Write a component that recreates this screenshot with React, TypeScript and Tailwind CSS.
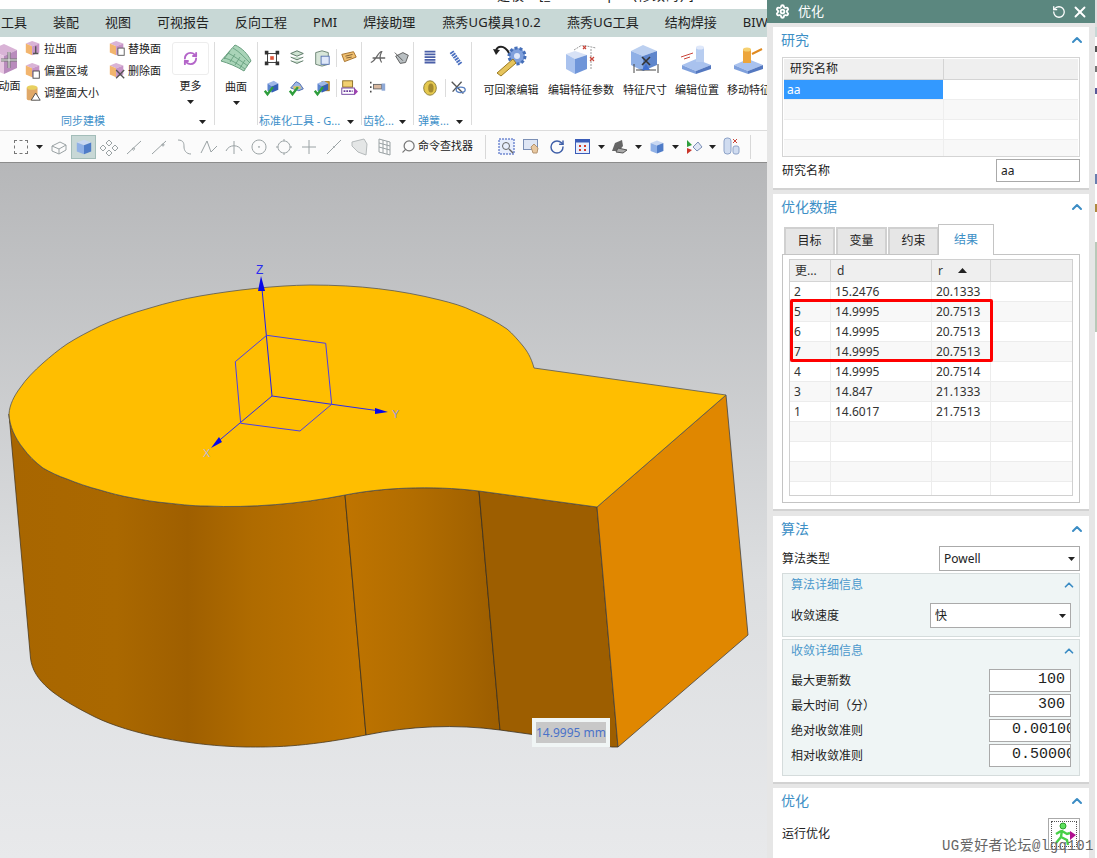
import { ChevronUp, RefreshCw, RotateCw, Search, X, Settings } from 'lucide-react';
import type { ReactNode } from 'react';

const MENU = [
  ['工具', ''],
  ['装配', ''],
  ['视图', ''],
  ['可视报告', ''],
  ['反向工程', ''],
  ['PMI', ''],
  ['焊接助理', ''],
  ['燕秀UG模具10.2', 'ml-px tracking-[0.2px]'],
  ['燕秀UG工具', 'tracking-[0.15px]'],
  ['结构焊接', ''],
  ['BIW', ''],
];

const RESULTS = [
  ['2', '15.2476', '20.1333'],
  ['5', '14.9995', '20.7513'],
  ['6', '14.9995', '20.7513'],
  ['7', '14.9995', '20.7513'],
  ['4', '14.9995', '20.7514'],
  ['3', '14.847', '21.1333'],
  ['1', '14.6017', '21.7513'],
  ['', '', ''],
  ['', '', ''],
  ['', '', ''],
  ['', '', ''],
];

// outline pieces of the part, in screen coordinates
const FRONT_LEFT =
  'C9.500 425 15 437 23 447C28 454 35 461 43 467C50 471 58 475 67 478C77 482 88 486 100 489C110 492 121 495 133 497C144 499 155 501 167 502C178 503 190 505 207 505C250 507 300 503 345 494';
const BACK =
  'M9 413C9.500 404 14 395 20 387C26 378 34 370 43 362C50 356 58 349 67 343C78 336 88 331 100 325C115 318 132 312 150 307C166 302 183 298 200 295C235 289 275 284.500 310 284C360 284 400 289 440 299C452 302 463 305 473 310C485 315 497 321 507 328C513 333 518 339 523 345C527 350 531 356 534 367L726 394L597 506L479 490C430 484 380 487 345 494L345 494';
const FRONT_BACK =
  'C300 503 250 507 207 505C190 505 178 503 167 502C155 501 144 499 133 497C121 495 110 492 100 489C88 486 77 482 67 478C58 475 50 471 43 467C35 461 28 454 23 447C15 437 9.500 425 9 413Z';

function Ico({ size = 18, children }: { size?: number; children: ReactNode }) {
  return (
    <svg width={size} height={size} viewBox="0 0 20 20" className="shrink-0">
      {children}
    </svg>
  );
}

function Caret() {
  return (
    <svg width="7" height="4" viewBox="0 0 7 4" className="shrink-0">
      <polygon points="0,0 7,0 3.5,4" fill="#222" />
    </svg>
  );
}

function PinkCube({ children }: { children?: ReactNode }) {
  return (
    <Ico>
      <polygon points="9,1 17,4 9,7 2,4" fill="#d9b3d6" />
      <polygon points="2,4 9,7 9,17 2,14" fill="#f2b56e" />
      <polygon points="9,7 17,4 17,14 9,17" fill="#c693c6" />
      {children}
    </Ico>
  );
}

function BlueCube({ size = 18 }: { size?: number }) {
  return (
    <Ico size={size}>
      <polygon points="10,2 18,5 10,8 2,5" fill="#c9d8f2" />
      <polygon points="2,5 10,8 10,18 2,15" fill="#8fb0e6" />
      <polygon points="10,8 18,5 18,15 10,18" fill="#4f7cc8" />
    </Ico>
  );
}

function BlueBlock() {
  return (
    <>
      <polygon points="5,5 12,2 17,5 10,8" fill="#9db7e8" />
      <polygon points="5,5 10,8 10,15 5,13" fill="#5b84d0" />
      <polygon points="10,8 17,5 17,12 10,15" fill="#345fb4" />
    </>
  );
}

function GreenCheck() {
  return <polyline points="2,13 5,17 11,9" fill="none" stroke="#2f9e3c" strokeWidth="2.6" />;
}

function SmallFace({ icon, label }: { icon: ReactNode; label: string }) {
  return (
    <div className="flex h-[22px] items-center text-[11px] whitespace-nowrap text-[#222]">
      {icon}
      <span className="ml-[2px]">{label}</span>
    </div>
  );
}

function GroupLabel({ text, wide }: { text: string; wide: string }) {
  return (
    <div className={`mt-auto flex h-[19px] items-center justify-between pt-[2px] text-[11px] whitespace-nowrap text-[#3d90c9] ${wide}`}>
      <span>{text}</span>
      <Caret />
    </div>
  );
}

function Sep() {
  return <div className="my-[5px] w-px shrink-0 bg-[#dcdcdc]" />;
}

function MiniSep() {
  return <div className="h-[18px] w-px bg-[#dcdcdc]" />;
}

function BigTool({ icon, label, width }: { icon: ReactNode; label: string; width: string }) {
  return (
    <div className={`flex shrink-0 flex-col items-center ${width}`}>
      <div className="flex h-[36px] items-center justify-center">{icon}</div>
      <span className="mt-[4px] text-[11px] whitespace-nowrap text-[#222]">{label}</span>
    </div>
  );
}

function Slot({ children, active }: { children?: ReactNode; active?: boolean }) {
  return (
    <div className={`flex h-[24px] w-[25px] shrink-0 items-center justify-center ${active ? 'border border-[#a3bdb9] bg-[#c8d8d6]' : ''}`}>
      {children}
    </div>
  );
}

function CaretSlot() {
  return (
    <div className="flex h-[24px] w-[12px] shrink-0 items-center justify-center">
      <Caret />
    </div>
  );
}

function Line({ d }: { d: string }) {
  return (
    <Ico size={20}>
      <path d={d} fill="none" stroke="#9aa2a4" strokeWidth="1" />
    </Ico>
  );
}

function Ribbon() {
  return (
    <div className="flex h-[93px] bg-white">
      <div className="flex w-[214px] shrink-0 flex-col">
        <div className="flex pt-px">
          <div className="w-[24px] shrink-0 overflow-hidden">
            <div className="-ml-[14px] flex w-[36px] flex-col items-center">
              <svg width="28" height="32" viewBox="0 0 28 32" className="mt-[6px]">
                <polygon points="14,0 27,6 14,12 1,6" fill="#d9b3d6" />
                <polygon points="1,6 14,12 14,30 1,24" fill="#e7c7e2" />
                <polygon points="14,12 27,6 27,24 14,30" fill="#b98bbd" />
                <path d="M19 8v16M11 16h16" stroke="#777" strokeWidth="3" />
                <path d="M19 8v16M11 16h16" stroke="#eee" strokeWidth="1" />
              </svg>
              <span className="mt-[2px] text-[11px] whitespace-nowrap text-[#222]">移动面</span>
            </div>
          </div>
          <div className="w-[84px] shrink-0">
            <SmallFace
              label="拉出面"
              icon={
                <PinkCube>
                  <path d="M13 7v8M10 15h6" stroke="#555" strokeWidth="1.5" />
                </PinkCube>
              }
            />
            <SmallFace
              label="偏置区域"
              icon={
                <PinkCube>
                  <rect x="10" y="10" width="7" height="8" fill="#fff" stroke="#444" />
                </PinkCube>
              }
            />
            <SmallFace
              label="调整面大小"
              icon={
                <Ico>
                  <rect x="3" y="3" width="12" height="15" rx="2" fill="#e0a868" />
                  <ellipse cx="9" cy="4" rx="6" ry="2.5" fill="#e8d060" />
                  <polygon points="13,10 18,18 8,18" fill="#fff" stroke="#444" />
                </Ico>
              }
            />
          </div>
          <div className="w-[64px] shrink-0">
            <SmallFace
              label="替换面"
              icon={
                <PinkCube>
                  <rect x="11" y="9" width="7" height="8" fill="#fff" stroke="#555" />
                </PinkCube>
              }
            />
            <SmallFace
              label="删除面"
              icon={
                <PinkCube>
                  <path d="M9 9l9 9M18 9l-9 9" stroke="#555" strokeWidth="1.5" />
                </PinkCube>
              }
            />
          </div>
          <div className="flex w-[37px] shrink-0 flex-col items-center">
            <div className="mt-[4px] flex h-[33px] w-[37px] items-center justify-center rounded-[3px] border border-[#ededed]">
              <RefreshCw size={15} strokeWidth={3} color="#b465c9" />
            </div>
            <span className="mt-[3px] text-[11px] text-[#222]">更多</span>
            <div className="mt-[5px] flex">
              <Caret />
            </div>
          </div>
        </div>
        <div className="mt-auto flex h-[19px] items-center pt-[2px] pr-[8px] pl-[61px] text-[11px] text-[#3d90c9]">
          <span>同步建模</span>
          <div className="ml-auto flex">
            <Caret />
          </div>
        </div>
      </div>
      <Sep />
      <div className="flex w-[42px] shrink-0 flex-col items-center">
        <svg width="32" height="28" viewBox="0 0 32 28" className="mt-[7px]">
          <path d="M1 17 C8 9 12 4 15 1 C22 4 28 10 31 17 C28 20 26 24 24 27 C16 22 8 19 1 17Z" fill="#a9d4b8" stroke="#6a9f80" />
          <path d="M8 9 C14 12 21 17 28 22 M13 4 C20 8 25 14 30 19 M4 14 C10 15 18 20 25 25 M10 7 L4 15 M15 10 L10 18 M20 13 L15 21 M25 16 L20 24" fill="none" stroke="#5f9a78" strokeWidth="0.8" />
        </svg>
        <span className="mt-[7px] text-[11px] text-[#222]">曲面</span>
        <div className="mt-[5px] flex">
          <Caret />
        </div>
      </div>
      <Sep />
      <div className="flex w-[103px] shrink-0 flex-col">
        <div className="grid grid-cols-[25px_25px_25px_25px] pt-[6px] pl-[1px]">
          <div className="flex h-[30px] items-center justify-center">
            <Ico>
              <rect x="5" y="5" width="10" height="10" fill="none" stroke="#333" />
              <path d="M2 2h4v4H2zM14 2h4v4h-4zM2 14h4v4H2zM14 14h4v4h-4z" fill="#333" />
              <rect x="8" y="8" width="4" height="4" fill="#e0563a" />
            </Ico>
          </div>
          <div className="flex h-[30px] items-center justify-center">
            <Ico>
              <path d="M3 5l7-3 7 3-7 3zM3 9l7 3 7-3M3 13l7 3 7-3" fill="#cfe3d2" stroke="#54715f" />
            </Ico>
          </div>
          <div className="flex h-[30px] items-center justify-center">
            <Ico>
              <path d="M3 4l7-2 7 2v13l-7 2-7-2z" fill="#d8e6d9" stroke="#657f6e" />
              <rect x="9" y="8" width="9" height="9" fill="#dfe8fa" stroke="#5572b0" />
            </Ico>
          </div>
          <div className="flex h-[30px] items-center justify-center gap-[3px]">
            <MiniSep />
            <Ico>
              <polygon points="2,6 15,3 18,9 5,14" fill="#f0c070" stroke="#a06a20" />
              <path d="M6 8l8-2M7 10l6-1" stroke="#7a5a30" />
            </Ico>
          </div>
          <div className="flex h-[30px] items-center justify-center">
            <Ico>
              <BlueBlock />
              <GreenCheck />
            </Ico>
          </div>
          <div className="flex h-[30px] items-center justify-center">
            <Ico>
              <path d="M3 10l6-7 4 2 4 6-5 2z" fill="#9db7e8" stroke="#4a66a8" />
              <rect x="6" y="8" width="8" height="3" fill="#d9c26a" />
              <GreenCheck />
            </Ico>
          </div>
          <div className="flex h-[30px] items-center justify-center">
            <Ico>
              <rect x="10" y="3" width="8" height="10" fill="#edb23b" stroke="#9a6b10" />
              <BlueBlock />
              <GreenCheck />
            </Ico>
          </div>
          <div className="flex h-[30px] items-center justify-center gap-[3px]">
            <MiniSep />
            <Ico>
              <rect x="3" y="2" width="11" height="7" fill="#f2d070" stroke="#8a6a20" />
              <rect x="2" y="10" width="14" height="7" fill="#fff" stroke="#6a3a9a" />
              <path d="M4 13.5h10" stroke="#6a3a9a" strokeWidth="2" strokeDasharray="2 1" />
              <polygon points="16,10 20,14 16,18" fill="#a040b0" />
            </Ico>
          </div>
        </div>
        <GroupLabel text="标准化工具 - G..." wide="pr-[7px] pl-[1px]" />
      </div>
      <Sep />
      <div className="flex w-[51px] shrink-0 flex-col">
        <div className="grid grid-cols-[25px_23px] pt-[6px] pl-[3px]">
          <div className="flex h-[30px] items-center justify-center">
            <Ico>
              <path d="M2 15C8 13 10 3 14 3c-2 4-2 9 0 12M4 10h14" fill="none" stroke="#666" strokeWidth="1.4" />
            </Ico>
          </div>
          <div className="flex h-[30px] items-center justify-center">
            <Ico>
              <path d="M3 8l8-4 6 3-3 8-6 1z" fill="#b9bfc2" stroke="#555" />
              <path d="M2 4l9 9" stroke="#555" />
            </Ico>
          </div>
          <div className="flex h-[30px] items-center justify-center">
            <Ico>
              <path d="M2 3v2M2 8v2M2 13v2" stroke="#333" strokeWidth="1.5" />
              <rect x="5" y="6" width="9" height="5" fill="#d9b9a0" stroke="#666" />
              <rect x="14" y="5" width="4" height="8" fill="#8fa9d6" />
            </Ico>
          </div>
        </div>
        <GroupLabel text="齿轮..." wide="pr-[7px] pl-[1px]" />
      </div>
      <Sep />
      <div className="flex w-[57px] shrink-0 flex-col">
        <div className="grid grid-cols-[26px_26px] pt-[6px] pl-[3px]">
          <div className="flex h-[30px] items-center justify-center">
            <Ico>
              <path d="M4 3h12M4 6h12M4 9h12M4 12h12M4 15h12" stroke="#4a5fa8" strokeWidth="2" />
            </Ico>
          </div>
          <div className="flex h-[30px] items-center justify-center">
            <Ico>
              <path d="M5 3l10 14" stroke="#4a6fc0" strokeWidth="5" strokeDasharray="2 1" />
            </Ico>
          </div>
          <div className="flex h-[30px] items-center justify-center">
            <Ico>
              <ellipse cx="10" cy="10" rx="7" ry="8" fill="#e5c84e" stroke="#8a7a30" />
              <ellipse cx="11" cy="10" rx="3" ry="5" fill="#a48a30" />
            </Ico>
          </div>
          <div className="flex h-[30px] items-center justify-center gap-[3px]">
            <MiniSep />
            <Ico>
              <path d="M3 3l13 13M14 3L4 14" stroke="#555" strokeWidth="1.5" />
              <ellipse cx="13" cy="12" rx="5" ry="3" fill="none" stroke="#5a80c0" strokeWidth="1.5" />
            </Ico>
          </div>
        </div>
        <GroupLabel text="弹簧..." wide="pr-[8px] pl-[4px]" />
      </div>
      <Sep />
      <div className="flex min-w-0 flex-1 overflow-hidden pt-[5px] pl-[12px]">
        <BigTool
          width="w-[54px]"
          label="可回滚编辑"
          icon={
            <svg width="36" height="34" viewBox="0 0 36 34">
              <circle cx="24" cy="13" r="8" fill="#7fa0dc" stroke="#466fb8" strokeWidth="3" strokeDasharray="3 2" />
              <circle cx="24" cy="13" r="3" fill="#dfe8fa" />
              <path d="M4 30l16-14 3 4-15 13z" fill="#e6c45c" stroke="#9b7a20" />
              <path d="M16 10C11 1 4 3 3 8" fill="none" stroke="#222" strokeWidth="2" />
              <polygon points="0,6 7,7 3,12" fill="#222" />
            </svg>
          }
        />
        <div className="w-[10px] shrink-0" />
        <BigTool
          width="w-[66px]"
          label="编辑特征参数"
          icon={
            <svg width="32" height="30" viewBox="0 0 32 30">
              <polygon points="10,6 22,10 10,14 1,9" fill="#d8e2f6" />
              <polygon points="1,9 10,14 10,29 1,24" fill="#a9c2ee" />
              <polygon points="10,14 22,10 22,24 10,29" fill="#6f95d9" />
              <path d="M9 5L17 0l14 3M26 4v20" fill="none" stroke="#999" strokeDasharray="2 1" />
              <path d="M25 12l4 4M29 12l-4 4M18 1l3 3M21 1l-3 3" stroke="#c9453a" strokeWidth="1.2" />
            </svg>
          }
        />
        <div className="w-[9px] shrink-0" />
        <BigTool
          width="w-[44px]"
          label="特征尺寸"
          icon={
            <svg width="32" height="30" viewBox="0 0 32 30">
              <polygon points="14,0 28,6 14,11 2,6" fill="#bcd0f0" />
              <polygon points="2,6 14,11 14,26 2,20" fill="#8fb0e6" />
              <polygon points="14,11 28,6 28,20 14,26" fill="#5f86cc" />
              <path d="M13 12l8 8M21 12l-8 8" stroke="#333" strokeWidth="1.6" />
              <path d="M5 19v9M29 19v9M7 25h20" stroke="#444" />
              <polygon points="17,19 21,25 13,25" fill="#3f6fd0" />
            </svg>
          }
        />
        <div className="w-[8px] shrink-0" />
        <BigTool
          width="w-[44px]"
          label="编辑位置"
          icon={
            <svg width="32" height="30" viewBox="0 0 32 30">
              <polygon points="15,14 30,20 15,26 1,20" fill="#a9c2ee" />
              <polygon points="1,20 15,26 15,29 1,24" fill="#7fa0dc" />
              <polygon points="15,26 30,20 30,24 15,29" fill="#5478c0" />
              <rect x="15" y="2" width="8" height="15" fill="#b8cdf0" />
              <ellipse cx="19" cy="2.5" rx="4" ry="2" fill="#dfe8fa" />
              <path d="M0 12l12-4M3 14l6-2" stroke="#c9453a" />
            </svg>
          }
        />
        <div className="w-[8px] shrink-0" />
        <BigTool
          width="w-[44px]"
          label="移动特征"
          icon={
            <svg width="32" height="30" viewBox="0 0 32 30">
              <polygon points="15,14 30,20 15,26 1,20" fill="#a9c2ee" />
              <polygon points="1,20 15,26 15,29 1,24" fill="#7fa0dc" />
              <polygon points="15,26 30,20 30,24 15,29" fill="#5478c0" />
              <rect x="10" y="4" width="8" height="14" fill="#eda53a" />
              <ellipse cx="14" cy="4.5" rx="4" ry="2" fill="#f6d070" />
              <path d="M19 9l10-5" stroke="#e08a20" strokeWidth="2" />
            </svg>
          }
        />
      </div>
    </div>
  );
}

function Toolbar() {
  return (
    <div className="flex h-[32px] items-center border-t border-[#dcdcdc] bg-[#fbfbfb]">
      <div className="w-[8px] shrink-0" />
      <Slot>
        <div className="h-[14px] w-[14px] border border-dashed border-[#777]" />
      </Slot>
      <CaretSlot />
      <div className="w-px shrink-0" />
      <Slot>
        <Line d="M3 9l8-4 6 3v5l-7 4-7-3zM3 9l7 3 7-4M10 12v5" />
      </Slot>
      <Slot active>
        <BlueCube />
      </Slot>
      <Slot>
        <Line d="M10 3l3 3-3 3-3-3zM4 8l3 3-3 3-3-3zM16 8l3 3-3 3-3-3zM10 13l3 3-3 3-3-3z" />
      </Slot>
      <Slot>
        <Line d="M3 17L17 4M9.500 11a1 1 0 1 0 .01 0" />
      </Slot>
      <Slot>
        <Line d="M3 17L17 4M14 7a1 1 0 1 0 .01 0" />
      </Slot>
      <Slot>
        <Line d="M4 3c6 0 6 4 6 7s2 7 7 7" />
      </Slot>
      <Slot>
        <Line d="M2 16L8 4l4 11 6-6M8 4h.01M12 15h.01" />
      </Slot>
      <Slot>
        <Line d="M2 14C5 7 15 7 18 14M10 4v13" />
      </Slot>
      <Slot>
        <Line d="M10 3a7 7 0 1 0 .01 0M10 9.500a.5.5 0 1 0 .01 0" />
      </Slot>
      <Slot>
        <Line d="M10 4a6 6 0 1 0 .01 0M10 2v2M10 16v2M2 10h2M16 10h2" />
      </Slot>
      <Slot>
        <Line d="M10 3v14M3 10h14" />
      </Slot>
      <Slot>
        <Line d="M3 17L17 3M10 9.500a.5.5 0 1 0 .01 0" />
      </Slot>
      <Slot>
        <svg width="20" height="20" viewBox="0 0 20 20">
          <path d="M3 5l12-3 3 5-1 11-8-3-6-6z" fill="#e4e6e6" stroke="#b5babb" />
        </svg>
      </Slot>
      <Slot>
        <Line d="M5 2l11 3v13L5 15zM5 6l11 3M5 10l11 3M9 3v13M13 4v13" />
      </Slot>
      <Slot>
        <Search size={15} color="#777" className="-scale-x-100" />
      </Slot>
      <span className="ml-[-3px] w-[58px] shrink-0 text-[11px] text-[#222]">命令查找器</span>
      <div className="ml-[9px] h-[24px] w-px shrink-0 bg-[#d8d8d8]" />
      <div className="w-[8px] shrink-0" />
      <Slot>
        <svg width="17" height="17" viewBox="0 0 17 17">
          <rect x="1" y="1" width="15" height="15" fill="#e8eefc" stroke="#3355bb" strokeDasharray="2 1" />
          <circle cx="8" cy="8" r="3.500" fill="none" stroke="#666" />
          <path d="M11 11l4 4" stroke="#666" strokeWidth="1.5" />
        </svg>
      </Slot>
      <Slot>
        <svg width="17" height="15" viewBox="0 0 17 15">
          <rect x="0.500" y="0.500" width="14" height="10" fill="#dfe6f4" stroke="#7b8fb5" />
          <path d="M8 8l3-3 4 4-1 5h-4z" fill="#e8c8a0" stroke="#b59470" />
        </svg>
      </Slot>
      <Slot>
        <RotateCw size={16} color="#3f5fa8" strokeWidth={2.2} />
      </Slot>
      <div className="w-px shrink-0" />
      <Slot>
        <svg width="15" height="15" viewBox="0 0 15 15">
          <rect x="0.500" y="0.500" width="14" height="14" fill="#e8eefc" stroke="#3a5cb8" />
          <rect x="0.500" y="0.500" width="14" height="3" fill="#3a5cb8" />
          <path d="M4 6h2v2H4zM9 6h2v2H9zM4 10h2v2H4zM9 10h2v2H9z" fill="#d43a2a" />
        </svg>
      </Slot>
      <CaretSlot />
      <Slot>
        <svg width="17" height="15" viewBox="0 0 17 15">
          <path d="M1 12l3-8 7-3 1 6-4 5z" fill="#666" />
          <path d="M7 9l9 2-4 3-7-1z" fill="#aaa" stroke="#555" />
        </svg>
      </Slot>
      <CaretSlot />
      <Slot>
        <BlueCube size={16} />
      </Slot>
      <CaretSlot />
      <Slot>
        <svg width="18" height="16" viewBox="0 0 18 16">
          <polygon points="2,1 7,6 2,8" fill="#2e9e3c" />
          <polygon points="2,9 7,11 2,15" fill="#c9352a" />
          <polygon points="8,8 13,3 17,8 12,12" fill="#dfe6f4" stroke="#7b8fb5" />
        </svg>
      </Slot>
      <CaretSlot />
      <div className="w-px shrink-0" />
      <Slot>
        <svg width="17" height="19" viewBox="0 0 17 19">
          <rect x="1" y="1" width="7" height="16" rx="3" fill="#d0dcf0" stroke="#8ea3c8" />
          <rect x="10" y="9" width="6" height="8" rx="2" fill="#d0dcf0" stroke="#8ea3c8" />
          <path d="M10 2l4 4M14 2l-4 4" stroke="#c9453a" />
        </svg>
      </Slot>
      <div className="ml-[6px] h-[24px] w-px shrink-0 bg-[#d8d8d8]" />
    </div>
  );
}

function Canvas() {
  return (
    <div className="relative h-[696px] overflow-hidden border-t border-[#8c8c8c] bg-gradient-to-b from-[#b6b7b9] via-[#dcdee0] via-60% to-[#e8e9eb]">
      <svg width="767" height="696" viewBox="0 162 767 696" className="block">
        <defs>
          <linearGradient id="leftSide" gradientUnits="userSpaceOnUse" x1="9" y1="0" x2="366" y2="0">
            <stop offset="0" stopColor="#a86600" />
            <stop offset="0.3" stopColor="#aa6800" />
            <stop offset="0.5" stopColor="#9f5f00" />
            <stop offset="0.68" stopColor="#af6b00" />
            <stop offset="0.9" stopColor="#bb7200" />
            <stop offset="1" stopColor="#c07500" />
          </linearGradient>
          <linearGradient id="midSide" gradientUnits="userSpaceOnUse" x1="345" y1="0" x2="495" y2="0">
            <stop offset="0" stopColor="#bf7400" />
            <stop offset="0.45" stopColor="#b26d00" />
            <stop offset="0.8" stopColor="#a56400" />
            <stop offset="1" stopColor="#9d5e00" />
          </linearGradient>
        </defs>
        <path
          d={`M9 413${FRONT_LEFT}L366 734C300 747 270 746 246 746C190 745 130 733 95 716C55 696 33 680 30.500 657Z`}
          fill="url(#leftSide)"
          stroke="#4a3a20"
          strokeWidth="0.8"
        />
        <path d="M345 494C380 487 430 484 479 490L500 729C455 723 410 725 366 734Z" fill="url(#midSide)" stroke="#3a3020" strokeWidth="0.8" />
        <path d="M479 490L597 506L618 746L612 746L536 734L500 729Z" fill="#9d5e00" stroke="#3a3020" strokeWidth="0.8" />
        <polygon points="597,506 726,394 748,634 618,746" fill="#e08700" stroke="#444" strokeWidth="0.8" />
        <path d={`${BACK}${FRONT_BACK}`} fill="#ffbe00" stroke="#555" strokeWidth="0.8" />
        <g fill="none" stroke="#4a3fe8" strokeWidth="1">
          <path d="M272 395L262 288" stroke="#2020f0" />
          <path d="M272 395L380 410" stroke="#2a2af0" />
          <path d="M272 395L215 443" stroke="#2a2af0" />
          <path d="M266.700 334.300L325.700 342.300L331.700 403.300M266.700 334.300L235.300 360.700L240.700 422.300L300 430L331.700 403.300" />
        </g>
        <polygon points="261,275 265,290 258,290" fill="#0808e8" />
        <polygon points="388,411 375,407 375,413" fill="#0808e8" />
        <polygon points="211,447 219,436 222,441" fill="#0808e8" />
        <text x="256" y="273" fontSize="12" fill="#2a2af0" fontFamily="Liberation Sans, sans-serif">
          Z
        </text>
        <text x="392" y="417" fontSize="11" fill="#8f90e0" fontFamily="Liberation Sans, sans-serif">
          Y
        </text>
        <text x="203" y="456" fontSize="11" fill="#b9b6d8" fontFamily="Liberation Sans, sans-serif">
          X
        </text>
      </svg>
      <div className="absolute top-[555px] left-[532px] border-4 border-[#f0f5f5] bg-[#c8c8c8] text-[12px] leading-[21px] whitespace-nowrap text-[#4a72c8]">
        14.9995 mm
      </div>
    </div>
  );
}

function SectionHead({ title }: { title: string }) {
  return (
    <div className="flex h-[26px] items-center justify-between pr-[4px] pl-[8px] text-[14px] text-[#3d8fc6]">
      <span className="-mt-[2px]">{title}</span>
      <ChevronUp size={16} strokeWidth={3} color="#3b8cc4" />
    </div>
  );
}

function SubHead({ title }: { title: string }) {
  return (
    <div className="flex h-[21px] items-center justify-between pr-[3px] pl-[8px] text-[12px] text-[#4b98cc]">
      <span>{title}</span>
      <ChevronUp size={14} strokeWidth={3} color="#3b8cc4" />
    </div>
  );
}

function Select({ value, width }: { value: string; width: string }) {
  return (
    <div className={`flex h-[25px] items-center justify-between border border-[#aaa] bg-white pr-[4px] pl-[4px] text-[12px] text-[#222] ${width}`}>
      <span>{value}</span>
      <Caret />
    </div>
  );
}

function NumberRow({ label, value, long }: { label: string; value: string; long?: boolean }) {
  return (
    <div className="flex h-[23px] items-center justify-between pr-[8px] pl-[8px] text-[12px] text-[#222]">
      <span>{label}</span>
      <div
        className={`flex h-[23px] w-[82px] items-center overflow-hidden border border-[#aaa] bg-white font-['Liberation_Mono',monospace] text-[15px] whitespace-nowrap ${
          long ? 'pl-[22px]' : 'justify-end pr-[5px]'
        }`}
      >
        {value}
      </div>
    </div>
  );
}

function StudyTable() {
  return (
    <div className="h-[100px] overflow-hidden border border-[#d4d4d4] p-px text-[12px]">
      <div className="flex h-[21px] border-b border-[#d4d4d4] bg-[#efefef] text-[#222]">
        <div className="flex w-[160px] items-center border-r border-[#d4d4d4] pl-[6px]">研究名称</div>
      </div>
      <div className="flex h-[20px] border-b border-[#eee]">
        <div className="flex w-[159px] items-center bg-[#3399ff] pl-[3px] text-white">aa</div>
      </div>
      {['bg-[#f8f8f8]', 'bg-white', 'bg-[#f8f8f8]'].map((bg, i) => (
        <div key={i} className={`flex h-[20px] border-b border-[#eee] ${bg}`}>
          <div className="w-[160px] border-r border-[#eee]" />
        </div>
      ))}
    </div>
  );
}

function ResultsTable() {
  return (
    <div className="relative h-[237px] w-[284px] overflow-hidden border border-[#d0d0d0] text-[12px] text-[#333]">
      <div className="flex h-[22px] border-b border-[#d4d4d4] bg-[#efefef]">
        <div className="flex w-[41px] items-center border-r border-[#d4d4d4] pl-[5px]">更...</div>
        <div className="flex w-[101px] items-center border-r border-[#d4d4d4] pl-[6px]">d</div>
        <div className="flex w-[59px] items-center gap-[15px] border-r border-[#d4d4d4] pl-[6px]">
          r
          <svg width="9" height="5" viewBox="0 0 9 5">
            <polygon points="4.500,0 9,5 0,5" fill="#222" />
          </svg>
        </div>
      </div>
      {RESULTS.map((row, i) => (
        <div key={i} className={`flex h-[20px] border-b border-[#ececec] ${i % 2 === 0 ? 'bg-white' : 'bg-[#f8f8f8]'}`}>
          <div className="flex w-[41px] items-center border-r border-[#ececec] pl-[4px]">{row[0]}</div>
          <div className="flex w-[101px] items-center border-r border-[#ececec] pl-[4px]">{row[1]}</div>
          <div className="flex w-[59px] items-center border-r border-[#ececec] pl-[4px]">{row[2]}</div>
        </div>
      ))}
      <div className="absolute top-[39px] left-0 h-[63px] w-[203px] rounded-[2px] border-[3px] border-[#ff0000]" />
    </div>
  );
}

function Panel() {
  return (
    <div className="w-[328px] shrink-0 bg-[#e6e6e6]">
      <div className="flex h-[23px] items-center bg-[#5b877f] pr-[6px] pl-[8px] text-[13px] text-white">
        <Settings size={15} strokeWidth={3} />
        <span className="ml-[8px]">优化</span>
        <RotateCw size={14} strokeWidth={2.2} className="ml-auto -scale-x-100" />
        <X size={18} strokeWidth={2.5} className="ml-[5px]" />
      </div>
      <div className="mt-[4px] ml-[6px] h-[163px] w-[316px] border-b-2 border-[#d2d2d2] bg-white">
        <SectionHead title="研究" />
        <div className="mt-[4px] px-[9px]">
          <StudyTable />
          <div className="mt-[2px] flex h-[23px] items-center justify-between text-[12px] text-[#222]">
            <span>研究名称</span>
            <div className="flex h-[23px] w-[84px] items-center border border-[#aaa] pl-[4px]">aa</div>
          </div>
        </div>
      </div>
      <div className="mt-[4px] ml-[6px] h-[317px] w-[316px] border-b-2 border-[#d2d2d2] bg-white">
        <SectionHead title="优化数据" />
        <div className="mt-[4px] px-[9px]">
          <div className="relative z-10 -mb-px flex h-[31px] items-end gap-px pl-[2px] text-[12px] text-[#222]">
            {['目标', '变量', '约束'].map((t) => (
              <div key={t} className="mb-px flex h-[27px] w-[51px] items-center justify-center border-x-2 border-t-2 border-[#d0d0d0] bg-[#e6e6e6] pb-px">
                {t}
              </div>
            ))}
            <div className="-ml-[2px] flex h-[31px] w-[56px] items-center justify-center border-x border-t border-[#c4c4c4] bg-white text-[#3d8fc6]">结果</div>
          </div>
          <div className="h-[249px] border border-[#c4c4c4] pt-[4px] pl-[6px]">
            <ResultsTable />
          </div>
        </div>
      </div>
      <div className="mt-[5px] ml-[6px] h-[268px] w-[316px] border-b-2 border-[#d2d2d2] bg-white">
        <SectionHead title="算法" />
        <div className="mt-[4px] px-[9px]">
          <div className="flex items-center justify-between text-[12px] text-[#222]">
            <span>算法类型</span>
            <Select value="Powell" width="w-[141px]" />
          </div>
          <div className="mt-[2px] h-[64px] border border-[#d5dcdc] bg-[#eff5f5]">
            <SubHead title="算法详细信息" />
            <div className="mt-[8px] flex items-center justify-between pr-[8px] pl-[8px] text-[12px] text-[#222]">
              <span>收敛速度</span>
              <Select value="快" width="w-[141px]" />
            </div>
          </div>
          <div className="mt-[2px] h-[137px] border border-[#d5dcdc] bg-[#eff5f5]">
            <SubHead title="收敛详细信息" />
            <div className="mt-[8px] flex flex-col gap-[2px]">
              <NumberRow label="最大更新数" value="100" />
              <NumberRow label="最大时间（分）" value="300" />
              <NumberRow label="绝对收敛准则" value="0.00100" long />
              <NumberRow label="相对收敛准则" value="0.50000" long />
            </div>
          </div>
        </div>
      </div>
      <div className="mt-[4px] ml-[6px] h-[70px] w-[316px] bg-white">
        <SectionHead title="优化" />
        <div className="mt-[4px] flex items-center justify-between px-[9px] text-[12px] text-[#222]">
          <span>运行优化</span>
          <div className="flex h-[32px] w-[32px] items-center justify-center border border-[#aaa]">
            <div className="flex h-[26px] w-[26px] items-center justify-center border border-dotted border-[#555]">
              <svg width="24" height="24" viewBox="0 0 24 24">
                <circle cx="11" cy="4" r="3" fill="#5ee05e" stroke="#2aa02a" />
                <path d="M10 8l-1 7-5 6M9 15l6 3 1 5M10 9l5 3 3-1M9 9l-5 3" fill="none" stroke="#47d047" strokeWidth="2.4" />
                <polygon points="18,9 24,13 18,18" fill="#b0108f" />
              </svg>
            </div>
          </div>
        </div>
      </div>
    </div>
  );
}

export default function App() {
  return (
    <div className="relative flex h-[858px] w-[1097px] overflow-hidden bg-white font-['Noto_Sans','Noto_Sans_CJK_SC',sans-serif]">
      <div className="flex w-[767px] shrink-0 flex-col">
        <div className="h-[9px] overflow-hidden bg-white">
          <div className="-mt-[13px] ml-[497px] text-[13px] leading-[16px] tracking-[1px] whitespace-nowrap text-[#222]">建模 - [_model1.prt (修改的) ]</div>
        </div>
        <div className="flex h-[28px] items-center gap-[26px] overflow-hidden bg-[#c8d8d6] pl-[1px] text-[13px] whitespace-nowrap text-[#222]">
          {MENU.map(([m, extra]) => (
            <span key={m} className={`shrink-0 ${extra}`}>
              {m}
            </span>
          ))}
        </div>
        <Ribbon />
        <Toolbar />
        <Canvas />
      </div>
      <Panel />
      <div className="flex w-[2px] shrink-0 flex-col bg-white">
        <div className="h-[27px] bg-[#dedede]" />
        <div className="h-[10px] bg-[#c8d8d6]" />
        <div className="mt-[9px] h-[6px] bg-[#555]" />
        <div className="mt-[14px] h-[6px] bg-[#777]" />
        <div className="mt-[16px] h-[6px] bg-[#5a5a9a]" />
        <div className="mt-[80px] h-[10px] bg-[#6a7fb0]" />
        <div className="mt-[20px] h-[8px] bg-[#b08a40]" />
        <div className="mt-[30px] h-[90px] bg-[#b9c9b9]" />
      </div>
      <div className="absolute top-[836px] left-[942px] font-['Liberation_Mono','Noto_Sans_CJK_SC',monospace] text-[14px] leading-[20px] tracking-[0.45px] whitespace-nowrap text-[#666]">
        UG爱好者论坛@lgq101
      </div>
    </div>
  );
}
